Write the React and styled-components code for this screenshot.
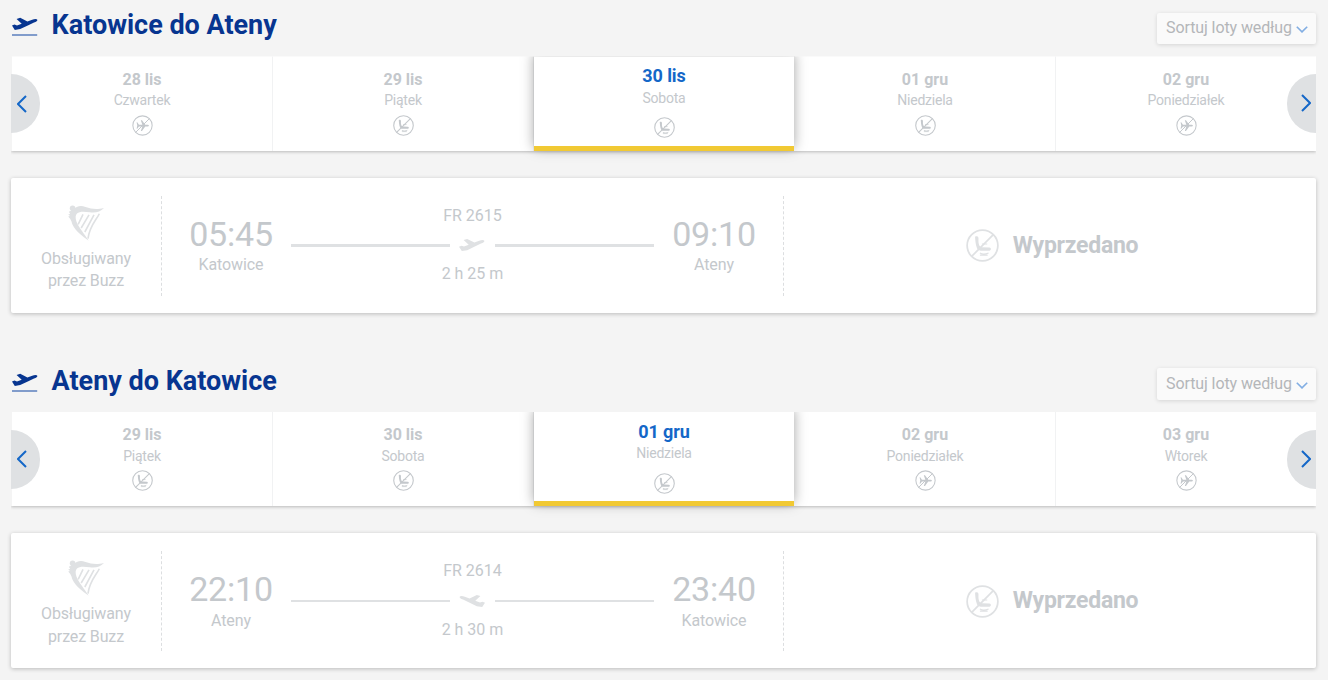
import React from "react";
import styled, { createGlobalStyle, css } from "styled-components";

const GlobalStyle = createGlobalStyle`
  * { box-sizing: border-box; }
  body {
    margin: 0;
    background: #f4f4f4;
    font-family: Roboto, "Liberation Sans", sans-serif;
    color: #c4c8cc;
    overflow: hidden;
  }
  svg { display: block; flex: none; }
  button { font-family: inherit; border: 0; }
`;

const Page = styled.main`
  width: 1328px;
  height: 680px;
  padding: 0 12px 0 11px;
  overflow: hidden;
`;

const Journey = styled.section`
  height: 355.5px;
`;

const Header = styled.header`
  display: flex;
  justify-content: space-between;
  height: 56px;
`;

const Title = styled.h2`
  display: flex;
  gap: 13.6px;
  margin: 0;
  padding: 9px 0 0 1px;
  font-size: 27px;
  font-weight: 700;
  letter-spacing: -0.02px;
  line-height: 32px;
  color: #073590;
  white-space: nowrap;
`;

const TitleIcon = styled.svg`
  margin-top: 7px;
`;

const SortButton = styled.button`
  display: flex;
  align-items: center;
  gap: 3px;
  width: 159px;
  height: 31.5px;
  margin-top: 12.5px;
  padding: 0 8.5px 1.4px 9px;
  background: #fafafa;
  border-radius: 2px;
  box-shadow: 0 1px 4px rgba(0, 0, 0, 0.13);
  color: #b4b6b9;
  font-size: 16px;
  letter-spacing: -0.1px;
  white-space: nowrap;
`;

const SortLabel = styled.span`
  flex: 1;
  text-align: left;
`;

const SortArrow = styled.svg`
  margin-top: 4px;
`;

const Carousel = styled.div`
  position: relative;
  height: 94.9px;
  clip-path: inset(0.4px 0 -16px 0);
`;

const Dates = styled.div`
  display: grid;
  grid-template-columns: repeat(5, 261px);
  height: 94.9px;
  background: #fff;
  border-left: 1px solid #f4f4f4;
  box-shadow: 0 1px 3px rgba(0, 0, 0, 0.24);
`;

const DateTab = styled.div`
  display: flex;
  flex-direction: column;
  align-items: center;
  height: 94.9px;
  padding-top: 12.7px;
  background: #fff;
  border-right: 1px solid #f1f2f3;
  ${(p) =>
    p.$selected &&
    css`
      z-index: 1;
      margin-right: 1px;
      padding-top: 9px;
      border-right: 0;
      border-bottom: 5px solid #f1c933;
      box-shadow: 0 -3px 12px rgba(0, 0, 0, 0.36);
    `}
`;

const DateLabel = styled.div`
  font-size: ${(p) => (p.$selected ? 18 : 16)}px;
  font-weight: 700;
  letter-spacing: ${(p) => (p.$selected ? -0.1 : 0)}px;
  line-height: 21px;
  color: ${(p) => (p.$selected ? "#1467c8" : "#c4c8cc")};
`;

const Weekday = styled.div`
  margin-bottom: ${(p) => (p.$selected ? 8.6 : 3.6)}px;
  font-size: 14px;
  letter-spacing: -0.22px;
  line-height: ${(p) => (p.$selected ? 22 : 21.3)}px;
  margin-top: ${(p) => (p.$selected ? 0.6 : 0.4)}px;
`;

const Arrow = styled.button`
  position: absolute;
  z-index: 2;
  top: 18px;
  ${(p) => (p.$next ? "right: 0;" : "left: 0;")}
  display: flex;
  align-items: center;
  justify-content: center;
  width: 29px;
  height: 59px;
  padding: 0;
  padding-left: ${(p) => (p.$next ? 8 : 0)}px;
  padding-right: ${(p) => (p.$next ? 0 : 8)}px;
  padding-bottom: ${(p) => (p.$next ? 1 : 0)}px;
  background: #dfe1e3;
  border-radius: ${(p) => (p.$next ? "30px 0 0 30px" : "0 30px 30px 0")};
`;

const Card = styled.article`
  display: flex;
  align-items: center;
  height: 135px;
  margin-top: 26.7px;
  padding-top: 1px;
  background: #fff;
  border-radius: 2px;
  box-shadow: 0 1px 4px rgba(0, 0, 0, 0.24);
`;

const Operator = styled.div`
  display: flex;
  flex-direction: column;
  align-items: center;
  width: 151px;
  height: 100px;
  padding-top: 9px;
  border-right: 1px dashed #dcdee0;
  font-size: 16px;
  letter-spacing: -0.13px;
  line-height: 22.5px;
  text-align: center;
`;

const OperatorText = styled.div`
  width: 110px;
  margin-top: 7px;
`;

const Route = styled.div`
  display: flex;
  justify-content: space-between;
  width: 622px;
  height: 100px;
  padding: 0 27px;
  border-right: 1px dashed #dcdee0;
`;

const Stop = styled.div`
  width: 84px;
  padding-top: 17.2px;
  text-align: center;
  white-space: nowrap;
`;

const Time = styled.div`
  font-size: 34px;
  letter-spacing: -0.2px;
  line-height: 42px;
`;

const City = styled.div`
  margin-top: 0.5px;
  font-size: 16px;
  letter-spacing: -0.1px;
  line-height: 20px;
`;

const Flight = styled.div`
  width: 363px;
  padding-top: 10px;
  font-size: 16px;
  line-height: 20px;
  text-align: center;
`;

const Track = styled.div`
  display: flex;
  align-items: center;
  gap: 9px;
  height: 38.6px;
  padding-top: 0.6px;
`;

const Line = styled.div`
  flex: 1;
  height: ${(p) => p.$weight}px;
  background: #dfe1e3;
`;

const SoldOut = styled.div`
  flex: 1;
  display: flex;
  align-items: center;
  justify-content: center;
  gap: 14px;
  padding-left: 4px;
  font-size: 23px;
  font-weight: 700;
  letter-spacing: -0.25px;
  line-height: 30px;
`;

const PLANE =
  "M0 8.2 2.5 7.2 5 8.1 9.7 6.3 4.6 1.5 8.2.4 15.4 4 20.2 2.3C22.5 1.4 24.8 1.3 25.3 2.3 25.8 3.2 24.2 4.3 22 5.1L15.8 8.1 8.2 11.7 2.8 12.5Z";

function Departure() {
  return (
    <TitleIcon width="26" height="22" viewBox="0 0 26 22">
      <path d={PLANE} transform="translate(0 1.4)" fill="#073590" />
      <path d="M0 19h25.2" stroke="#6486c1" strokeWidth="1.6" />
    </TitleIcon>
  );
}

function FlightIcon({ inbound }) {
  return (
    <svg width="27" height="14" viewBox="0 0 27 14">
      <path d={PLANE} transform={inbound ? "matrix(-1 0 0 1 26 .5)" : "translate(0 .5)"} fill="#dfe1e3" />
    </svg>
  );
}

function Chevron({ next }) {
  return (
    <svg width="10" height="18" viewBox="0 0 10 18" fill="none" stroke="#1467c8" strokeWidth="2">
      <path d={next ? "m1 1 8 8-8 8" : "M9 1 1 9l8 8"} />
    </svg>
  );
}

function NoFlight() {
  return (
    <svg width="21" height="21" viewBox="0 0 32 32">
      <circle cx="16" cy="16" r="14.7" fill="none" stroke="#c4c8cc" strokeWidth="1.6" />
      <path
        d="m8 11 2.6 3.8h5.2L13.4 8h1.8l5 6.8h3.6c2.6 0 2.6 2.6 0 2.6h-3.6l-5 6.8h-1.8l2.4-6.8h-5.2L8 21H7l1-4.9-1-5.1Z"
        fill="#c4c8cc"
      />
      <path d="M5.5 26.5 26.5 5.5" stroke="#c4c8cc" strokeWidth="1.5" />
    </svg>
  );
}

function NoSeat({ size = 21, color = "#c4c8cc" }) {
  return (
    <svg width={size} height={size} viewBox="0 0 32 32">
      <circle cx="16" cy="16" r="14.9" fill="none" stroke={color} strokeWidth="1.7" />
      <path
        d="M8.8 7.6c1.3-1 3.2-.4 3.3 1.2.1 2.2-.3 3.8.4 6 .4 1.6 1.3 2.8 3 2.9l7.2.3c1.9.1 1.9 3 0 3h-8.5c-2 0-3.1-1.1-3.7-2.7-1.3-3.6-1.5-7-1.7-10.7Z"
        fill={color}
      />
      <path d="M15.4 14.6h5.2M13.5 23.2c2 1.4 6 1.1 8.4 0M13.5 25.3h7.5" fill="none" stroke={color} strokeWidth="1.1" />
      <path d="M5.5 26.5 26.5 5.5" stroke={color} strokeWidth="1.7" />
    </svg>
  );
}

function Harp() {
  return (
    <svg width="37" height="36" viewBox="0 0 37 36" fill="#dfe1e3">
      <circle cx="4.6" cy="3.2" r="2.8" />
      <path d="M4.5 5.1C9 .9 12.5.3 17.5 1.9c6.2 2 10.8 2.8 18.5 1-3.8 3.7-7.8 5.2-14.2 4.4C15 6.4 11.5 6.5 9 8.6c-1.7 1.5-1.8 4.6-.4 8.4 2.4 6.3 8 11.8 12 18.7C14 30.5 5 24.4 3.4 16.2 2.7 14.2 1.7 13 .2 11.4l1.8-.4L.2 9.3l2-.3L.9 6.8Z" />
      <path
        d="m15 9.3-4.8 10M21 9.8 13.2 23M26 9.8 16.8 27M31.3 8.7c-2.2 5.3-9.9 12.2-11.3 25"
        fill="none"
        stroke="#dfe1e3"
        strokeWidth="1.6"
      />
    </svg>
  );
}

const journeys = [
  {
    from: "Katowice",
    to: "Ateny",
    number: "FR 2615",
    departs: "05:45",
    arrives: "09:10",
    duration: "2 h 25 m",
    dates: [
      ["28 lis", "Czwartek", true],
      ["29 lis", "Piątek"],
      ["30 lis", "Sobota"],
      ["01 gru", "Niedziela"],
      ["02 gru", "Poniedziałek", true],
    ],
  },
  {
    from: "Ateny",
    to: "Katowice",
    number: "FR 2614",
    departs: "22:10",
    arrives: "23:40",
    duration: "2 h 30 m",
    inbound: true,
    dates: [
      ["29 lis", "Piątek"],
      ["30 lis", "Sobota"],
      ["01 gru", "Niedziela"],
      ["02 gru", "Poniedziałek", true],
      ["03 gru", "Wtorek", true],
    ],
  },
];

function JourneyPanel({ journey: j }) {
  return (
    <Journey>
      <Header>
        <Title>
          <Departure />
          {j.from} do {j.to}
        </Title>
        <SortButton>
          <SortLabel>Sortuj loty według</SortLabel>
          <SortArrow width="12" height="7" viewBox="0 0 12 7" fill="none" stroke="#82aee3" strokeWidth="1.6">
            <path d="m.8.7 5.2 5.2L11.2.7" />
          </SortArrow>
        </SortButton>
      </Header>
      <Carousel>
        <Dates>
          {j.dates.map(([date, day, noFlight], i) => (
            <DateTab key={date} $selected={i === 2}>
              <DateLabel $selected={i === 2}>{date}</DateLabel>
              <Weekday $selected={i === 2}>{day}</Weekday>
              {noFlight ? <NoFlight /> : <NoSeat />}
            </DateTab>
          ))}
        </Dates>
        <Arrow aria-label="Poprzednie">
          <Chevron />
        </Arrow>
        <Arrow $next aria-label="Następne">
          <Chevron next />
        </Arrow>
      </Carousel>
      <Card>
        <Operator>
          <Harp />
          <OperatorText>Obsługiwany przez Buzz</OperatorText>
        </Operator>
        <Route>
          <Stop>
            <Time>{j.departs}</Time>
            <City>{j.from}</City>
          </Stop>
          <Flight>
            {j.number}
            <Track>
              <Line $weight={j.inbound ? 2 : 3} />
              <FlightIcon inbound={j.inbound} />
              <Line $weight={j.inbound ? 2 : 3} />
            </Track>
            {j.duration}
          </Flight>
          <Stop>
            <Time>{j.arrives}</Time>
            <City>{j.to}</City>
          </Stop>
        </Route>
        <SoldOut>
          <NoSeat size={33} color="#dfe1e3" />
          Wyprzedano
        </SoldOut>
      </Card>
    </Journey>
  );
}

export default function App() {
  return (
    <>
      <GlobalStyle />
      <Page>
        {journeys.map((j) => (
          <JourneyPanel key={j.number} journey={j} />
        ))}
      </Page>
    </>
  );
}
